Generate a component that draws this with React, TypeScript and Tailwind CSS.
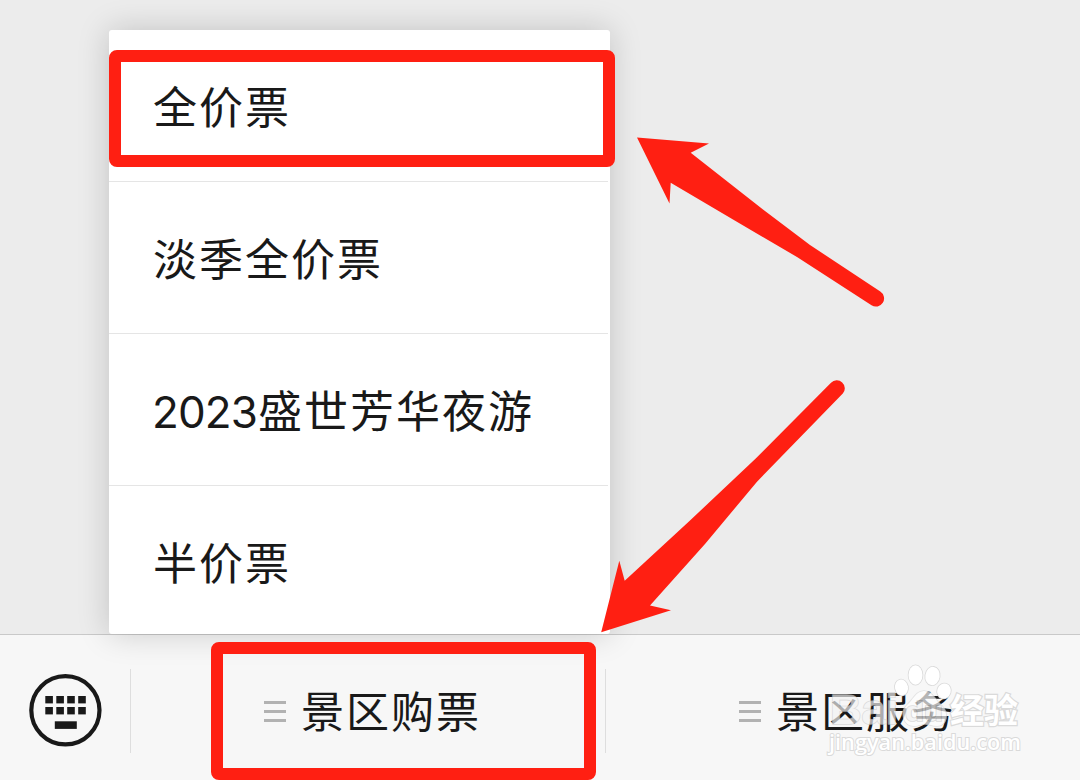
import React from 'react';

const tickets = [
    { name: '全价票' },
    { name: '淡季全价票' },
    { year: '2023', name: '盛世芳华夜游' },
    { name: '半价票' },
];
const tabs = ['景区购票', '景区服务'];

function KeyboardIcon() {
    return (
        <svg width="74" height="74" viewBox="0 0 74 74" fill="#191919">
            <circle cx="37.4" cy="37.3" r="34.1" fill="none" stroke="#191919" strokeWidth="4.2" />
            {[17.3, 28.3, 39.2, 50.2].map((x) => (
                <g key={x}>
                    <rect x={x} y="23" width="7.6" height="7.4" />
                    <rect x={x} y="34" width="7.6" height="7.4" />
                </g>
            ))}
            <rect x="26.8" y="48.3" width="22" height="7.6" />
        </svg>
    );
}

function Bars() {
    return (
        <div className="flex flex-col gap-[6px] w-[22px]">
            <div className="h-[3px] bg-[#b2b2b2]" />
            <div className="h-[3px] bg-[#b2b2b2]" />
            <div className="h-[3px] bg-[#b2b2b2]" />
        </div>
    );
}

function Watermark() {
    return (
        <svg className="absolute left-[820px] top-[655px]" width="215" height="110" viewBox="0 0 215 110"
            fill="#fff" stroke="#dadada" strokeWidth="1.6" paintOrder="stroke">
            <ellipse cx="81.5" cy="32.5" rx="6.5" ry="8" transform="rotate(-12 81.5 32.5)" />
            <ellipse cx="95.5" cy="20" rx="7" ry="9.7" />
            <ellipse cx="112.5" cy="21" rx="7.2" ry="9.2" transform="rotate(8 112.5 21)" />
            <ellipse cx="124" cy="36" rx="6.8" ry="7.5" transform="rotate(18 124 36)" />
            <g opacity="0.68">
                <path d="M104 36C96 36 93 45 87 50C80 57 83 71 94 71C99 71 101 69 105 69C109 69 112 71 117 71C127 71 129 58 122 51C115 45 112 36 104 36Z" />
                <text x="85" y="66" fontSize="27" fontWeight="700" fill="#f4f4f4" stroke="#d0d0d0" textLength="38" lengthAdjust="spacingAndGlyphs" fontFamily="Liberation Sans, sans-serif">du</text>
                <text x="10" y="69" fontSize="43" fontWeight="700" fill="#f4f4f4" stroke="#cfcfcf" textLength="68" lengthAdjust="spacingAndGlyphs" fontFamily="Liberation Sans, sans-serif">Bai</text>
            </g>
            <text x="130" y="68" fontSize="34" fontWeight="700" strokeWidth="2.4" fontFamily="Noto Sans CJK SC, sans-serif">经验</text>
            <text x="9" y="95" fontSize="22" fontWeight="600" strokeWidth="2" textLength="192" lengthAdjust="spacingAndGlyphs" fontFamily="Open Sans, sans-serif">jingyan.baidu.com</text>
        </svg>
    );
}

export default function App() {
    return (
        <div className="relative w-[1080px] h-[780px] overflow-hidden flex flex-col bg-[#ececec] text-[#191919] font-['Noto_Sans_CJK_SC',sans-serif]">
            {/* Sous-menu ouvert */}
            <main className="h-[634px] pt-[30px] pl-[109px]">
                <ul className="relative z-10 w-[501px] h-[604px] bg-white rounded-[3px] shadow-[0_0_32px_rgba(0,0,0,0.18)]">
                    {tickets.map((ticket) => (
                        <li key={ticket.name} className="h-[152px] last:h-[148px] pl-[44px] pt-[43px] mr-[2px] border-b border-[#e5e5e5] last:border-b-0 text-[44px] leading-[64px] tracking-[2px] whitespace-nowrap">
                            {ticket.year && (
                                <span className="-ml-px mr-px font-['Inter',sans-serif] leading-none tracking-[-0.9px]">{ticket.year}</span>
                            )}
                            {ticket.name}
                        </li>
                    ))}
                </ul>
            </main>

            {/* Barre du bas */}
            <footer className="h-[146px] flex bg-[#f7f7f7] border-t border-[#c9c9c9]">
                <div className="w-[130px] pl-[28px] pt-[38px]">
                    <KeyboardIcon />
                </div>
                {tabs.map((name) => (
                    <div key={name} className="flex w-[475px] pt-[34px]">
                        <div className="w-px h-[84px] bg-[#dedede]" />
                        <div className="flex items-center h-[84px] pl-[133px] gap-[15px]">
                            <Bars />
                            <span className="pb-[4px] text-[43px] leading-[60px] tracking-[2px]">{name}</span>
                        </div>
                    </div>
                ))}
            </footer>

            <Watermark />

            {/* Annotations rouges */}
            <div className="absolute z-20 left-[109px] top-[50px] w-[506px] h-[117px] border-[12px] border-[#ff1f12] rounded-[8px]" />
            <div className="absolute z-20 left-[211px] top-[642px] w-[385px] h-[138px] border-[12px] border-[#ff1f12] rounded-[8px]" />
            <svg className="absolute z-20 left-0 top-0" width="1080" height="780" fill="#ff1f12">
                <path d="M637 137.5L709 143.5L690.7 152.7L763 209.5L810 245L880.3 291.5A8 8 0 0 1 871.5 305.3L797 257L733 219.5L670.7 182.7L669.5 203.5Z" />
                <path d="M601.2 632.3L619.3 560.7L624.7 580.7L690 520.5L756 458.3L831 382.8A8 8 0 0 1 842.8 393.6L757 481.7L705 544L650 605.5L671 610.3Z" />
            </svg>
        </div>
    );
}
